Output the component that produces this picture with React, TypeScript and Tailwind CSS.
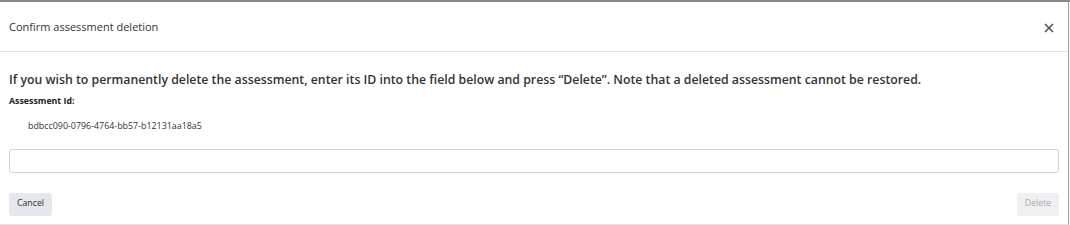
export default function App() {
  return (
    <div className="h-[225px] w-[1070px] bg-white font-['Open_Sans',sans-serif] text-[#212529]">
      <div className="h-[2px] w-full bg-[#8a8a8a]" />
      <div className="h-[223px] w-[1069px] border-r border-b border-r-[#9a9a9a] border-b-[#e6e6e6] flex flex-col">
        <div className="h-[50px] flex items-center justify-between pl-[9px] pr-[14px] pt-[1px] border-b border-[#e2e2e2]">
          <span className="text-[11px] text-[#333]">Confirm assessment deletion</span>
          <svg width="10" height="10" viewBox="0 0 10 10" className="mt-[1px]">
            <path d="M1 1 L9 9 M9 1 L1 9" stroke="#555" strokeWidth="1.7" />
          </svg>
        </div>
        <div className="px-[9px] pt-[19px]">
          <p className="text-[12.3px] font-semibold text-[#333] leading-[18px]">
            If you wish to permanently delete the assessment, enter its ID into the field below and press “Delete”. Note that a deleted assessment cannot be restored.
          </p>
          <div className="mt-[6px] text-[8.8px] font-bold text-[#222]">Assessment Id:</div>
          <div className="mt-[11px] pl-[19px] text-[8.9px] text-[#333]">bdbcc090-0796-4764-bb57-b12131aa18a5</div>
          <input className="mt-[16px] block h-[24px] w-full rounded-[3px] border border-[#ced4da] outline-none" />
          <div className="mt-[20px] flex justify-between">
            <button className="h-[23px] w-[43px] rounded-[3px] bg-[#e4e7eb] text-[8.8px] text-[#333]">Cancel</button>
            <button className="h-[23px] w-[42px] rounded-[3px] bg-[#eef0f2] text-[8.8px] text-[#aaa]">Delete</button>
          </div>
        </div>
      </div>
    </div>
  );
}
